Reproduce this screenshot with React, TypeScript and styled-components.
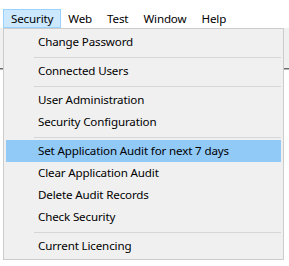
import React from 'react';
import styled, { createGlobalStyle } from 'styled-components';

const GlobalStyle = createGlobalStyle`
  html, body {
    margin: 0;
    padding: 0;
    background: #ffffff;
  }
  body {
    font-family: "Noto Sans", "Open Sans", sans-serif;
    font-size: 11.6px;
    letter-spacing: -0.15px;
    color: #000;
  }
`;

const Window = styled.div`
  position: relative;
  width: 289px;
  height: 266px;
  overflow: hidden;
  background: #ffffff;
`;

const MenuBar = styled.div`
  display: flex;
  height: 28px;
  padding: 9px 0 0 3px;
  box-sizing: border-box;
  background: #ffffff;
`;

const BarItem = styled.div<{ $open?: boolean }>`
  height: 19px;
  padding: 0 7px;
  box-sizing: border-box;
  display: flex;
  align-items: center;
  line-height: 17px;
  border: 1px solid ${(p) => (p.$open ? '#99d1ff' : 'transparent')};
  background: ${(p) => (p.$open ? '#cce8ff' : 'transparent')};
  margin-right: -1px;
`;

const ToolArea = styled.div`
  height: 40px;
  background: #f0f0f0;
  border-bottom: 1px solid #6e6e6e;
  box-shadow: 0 1px 0 #b4b4b4;
`;

const Dropdown = styled.div`
  position: absolute;
  top: 28px;
  left: 3px;
  width: 281px;
  box-sizing: border-box;
  padding: 2px;
  border: 1px solid #cccccc;
  background: #f0f0f0;
`;

const Item = styled.div<{ $active?: boolean }>`
  height: 22px;
  line-height: 22px;
  padding-left: 32px;
  white-space: nowrap;
  background: ${(p) => (p.$active ? '#91c9f7' : 'transparent')};
`;

const Separator = styled.div`
  height: 1px;
  margin: 4px 0 2px 28px;
  background: #d7d7d7;
`;

type Entry = { label: string; active?: boolean } | 'sep';

const entries: Entry[] = [
  { label: 'Change Password' },
  'sep',
  { label: 'Connected Users' },
  'sep',
  { label: 'User Administration' },
  { label: 'Security Configuration' },
  'sep',
  { label: 'Set Application Audit for next 7 days', active: true },
  { label: 'Clear Application Audit' },
  { label: 'Delete Audit Records' },
  { label: 'Check Security' },
  'sep',
  { label: 'Current Licencing' },
];

const menus = ['Security', 'Web', 'Test', 'Window', 'Help'];

export default function App() {
  return (
    <>
      <GlobalStyle />
      <Window>
        <MenuBar>
          {menus.map((m) => (
            <BarItem key={m} $open={m === 'Security'}>
              {m}
            </BarItem>
          ))}
        </MenuBar>
        <ToolArea />
        <Dropdown>
          {entries.map((e, i) =>
            e === 'sep' ? (
              <Separator key={i} />
            ) : (
              <Item key={i} $active={e.active}>
                {e.label}
              </Item>
            )
          )}
        </Dropdown>
      </Window>
    </>
  );
}
